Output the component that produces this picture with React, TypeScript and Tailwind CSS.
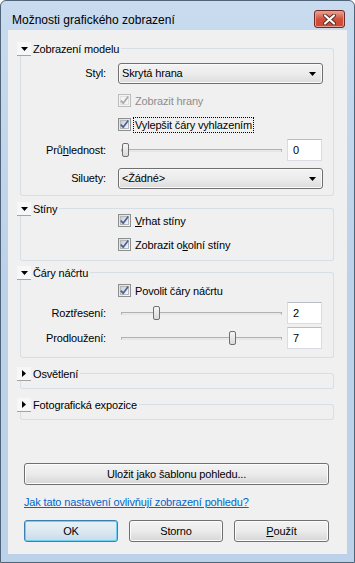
import type { ReactNode } from "react";

const BORDER = "border-[#d5dfe5]";

function Triangle({ dir }: { dir: "down" | "right" }) {
  return dir === "down" ? (
    <svg width="7" height="4" viewBox="0 0 7 4">
      <polygon points="0,0 7,0 3.5,4" fill="#000" />
    </svg>
  ) : (
    <svg width="4" height="7" viewBox="0 0 4 7">
      <polygon points="0,0 4,3.5 0,7" fill="#000" />
    </svg>
  );
}

function Section({
  title,
  open,
  children,
  bodyClass,
  className,
}: {
  title: string;
  open: boolean;
  children?: ReactNode;
  bodyClass: string;
  className: string;
}) {
  return (
    <div className={"ml-[9px] w-[317px] " + className}>
      <div className="flex h-[14px] items-start">
        <span className="flex h-[14px] w-[14px] items-center justify-center border-b border-[#a3a3a3] bg-[#f7f7f7]">
          <Triangle dir={open ? "down" : "right"} />
        </span>
        <span className="ml-[2px] leading-[14px]">{title}</span>
        <div className={"ml-[2px] mt-[6px] h-[8px] flex-1 rounded-tr-[3px] border-t border-r " + BORDER} />
      </div>
      <div className={"ml-[3px] rounded-b-[3px] border-r border-b border-l " + BORDER + " " + bodyClass}>
        {children}
      </div>
    </div>
  );
}

function Checkbox({
  label,
  checked = true,
  disabled = false,
  focused = false,
  className = "",
}: {
  label: ReactNode;
  checked?: boolean;
  disabled?: boolean;
  focused?: boolean;
  className?: string;
}) {
  return (
    <div className={"flex h-[13px] items-center pl-[97px] " + className}>
      <span
        className={
          "flex h-[13px] w-[13px] items-center justify-center border " +
          (disabled ? "border-[#bcbcbc] bg-[#f4f4f4]" : "border-[#8e8f8f] bg-gradient-to-br from-[#dcdcdc] to-[#fbfbfb]")
        }
      >
        <span
          className={
            "flex h-[9px] w-[9px] items-center justify-center border " +
            (disabled ? "border-[#e0e0e0] bg-[#f4f4f4]" : "border-[#b3b8bd] bg-gradient-to-br from-[#cbcfd5] to-[#f6f6f6]")
          }
        >
          {checked && (
            <svg width="9" height="9" viewBox="0 0 9 9" className="overflow-visible">
              <path
                d="M0.8 4.6 L3.2 7.2 L8.2 0.6"
                fill="none"
                stroke={disabled ? "#a7a7a7" : "#4a5f97"}
                strokeWidth="1.7"
              />
            </svg>
          )}
        </span>
      </span>
      <span
        className={
          "ml-[2px] px-[1px] leading-[14px] " +
          (disabled ? "text-[#8d8d8d] " : "text-black ") +
          (focused ? "border border-dotted border-black" : "border border-transparent")
        }
      >
        {label}
      </span>
    </div>
  );
}

function Combo({ value }: { value: string }) {
  return (
    <div className="flex h-[21px] w-[205px] items-center justify-between rounded-[3px] border border-[#707070] bg-gradient-to-b from-[#f3f3f3] via-[#ececec] to-[#dcdcdc] pl-[3px] pr-[6px] shadow-[inset_0_0_0_1px_#fafafa]">
      <span>{value}</span>
      <Triangle dir="down" />
    </div>
  );
}

function Slider({ value }: { value: number }) {
  return (
    <div className="flex items-center">
      <div className="relative flex h-[22px] w-[166px] items-center">
        <div className="ml-[3px] mr-[2px] h-[3px] flex-1 border border-[#b0b0b0] border-b-[#e5e5e5] bg-[#e7eaea]" />
        <div
          className="absolute top-[4px] h-[14px] w-[7px] rounded-[2px] border border-[#707070] bg-gradient-to-b from-[#f6f6f6] to-[#d9d9d9]"
          style={{ left: 4 + value * 15.3 }}
        />
      </div>
      <div className="ml-[3px] flex h-[22px] w-[35px] items-center border border-[#d9dde3] border-t-[#b9bdc4] bg-white pl-[5px]">
        {value}
      </div>
    </div>
  );
}

function Row({ label, children, className = "" }: { label: ReactNode; children: ReactNode; className?: string }) {
  return (
    <div className={"flex items-center " + className}>
      <span className="w-[85px] text-right">{label}</span>
      <div className="ml-[12px]">{children}</div>
    </div>
  );
}

function Button({ children, primary = false, className = "" }: { children: ReactNode; primary?: boolean; className?: string }) {
  return (
    <button
      className={
        "flex h-[22px] items-center justify-center rounded-[3px] border " +
        (primary
          ? "border-[#3c7fb1] bg-gradient-to-b from-[#e8f1f6] via-[#dde9f1] to-[#c7dbe7] shadow-[inset_0_0_0_1px_#6fd0f6] "
          : "border-[#707070] bg-gradient-to-b from-[#f3f3f3] via-[#ebebeb] to-[#d6d6d6] shadow-[inset_0_0_0_1px_#fcfcfc] ") +
        className
      }
    >
      {children}
    </button>
  );
}

export default function App() {
  return (
    <div className="flex h-[563px] w-[355px] flex-col rounded-t-[6px] border border-[#4f6479] bg-gradient-to-b from-[#c8dbef] via-[#bcd2ea] to-[#bcd2ea] font-['Liberation_Sans',Arial,sans-serif] text-[11px] tracking-[-0.15px] text-black">
      <div className="flex h-[29px] items-start">
        <span className="ml-[11px] mt-[12px] text-[12px] leading-[15px] tracking-normal text-black">Možnosti grafického zobrazení</span>
        <div className="ml-auto mr-[9px] mt-[9px] flex h-[18px] w-[31px] items-center justify-center rounded-[3px] border border-[#6b2a23] bg-gradient-to-b from-[#e9a595] via-[#d0503c] to-[#c84a34] shadow-[inset_0_0_0_1px_#ee9a8a]">
          <svg width="13" height="11" viewBox="0 0 13 11">
            <path d="M2 1.5 L11 9.5 M11 1.5 L2 9.5" stroke="#5a2a24" strokeWidth="4" strokeLinecap="round" />
            <path d="M2 1.5 L11 9.5 M11 1.5 L2 9.5" stroke="#fff" strokeWidth="2.2" strokeLinecap="round" />
          </svg>
        </div>
      </div>

      <div className="mx-[7px] mb-[8px] flex flex-1 flex-col bg-[#f0f0f0]">
        <Section title="Zobrazení modelu" open className="mt-[12px]" bodyClass="flex flex-col pt-[7px] pb-[6px]">
          <Row label="Styl:">
            <Combo value="Skrytá hrana" />
          </Row>
          <Checkbox label="Zobrazit hrany" disabled className="mt-[10px]" />
          <Checkbox label="Vylepšit čáry vyhlazením" focused className="mt-[11px]" />
          <Row
            className="mt-[8px]"
            label={
              <>
                Prů<span className="underline">h</span>lednost:
              </>
            }
          >
            <Slider value={0} />
          </Row>
          <Row label="Siluety:" className="mt-[7px]">
            <Combo value="<Žádné>" />
          </Row>
        </Section>

        <Section title="Stíny" open className="mt-[6px]" bodyClass="flex flex-col pb-[9px]">
          <Checkbox
            className="-mt-[2px]"
            label={
              <>
                <span className="underline">V</span>rhat stíny
              </>
            }
          />
          <Checkbox
            className="mt-[11px]"
            label={
              <>
                Zobrazit o<span className="underline">k</span>olní stíny
              </>
            }
          />
        </Section>

        <Section title="Čáry náčrtu" open className="mt-[5px]" bodyClass="flex flex-col pt-[4px] pb-[8px]">
          <Checkbox label="Povolit čáry náčrtu" />
          <Row label="Roztřesení:" className="mt-[5px]">
            <Slider value={2} />
          </Row>
          <Row label="Prodloužení:" className="mt-[3px]">
            <Slider value={7} />
          </Row>
        </Section>

        <Section title="Osvětlení" open={false} className="mt-[9px]" bodyClass="h-[8px]" />
        <Section title="Fotografická expozice" open={false} className="mt-[9px]" bodyClass="h-[8px]" />

        <Button className="ml-[16px] mt-[43px] w-[305px]">Uložit jako šablonu pohledu...</Button>

        <a className="ml-[16px] mt-[10px] self-start leading-[14px] text-[#0066cc] underline">
          Jak tato nastavení ovlivňují zobrazení pohledu?
        </a>

        <div className="ml-[16px] mt-[11px] flex gap-[11px]">
          <Button primary className="w-[94px]">
            OK
          </Button>
          <Button className="w-[94px]">Storno</Button>
          <Button className="w-[95px]">
            <span className="underline">P</span>oužít
          </Button>
        </div>
      </div>
    </div>
  );
}
